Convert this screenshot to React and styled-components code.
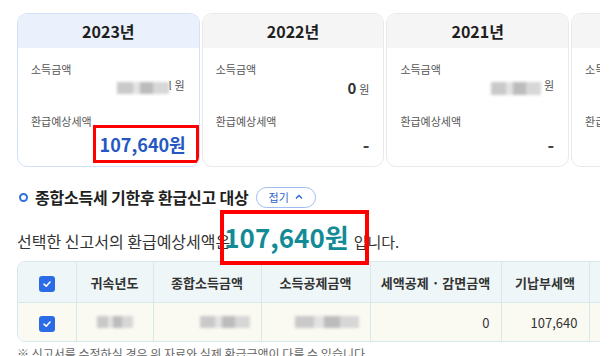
import React from 'react';
import styled, { createGlobalStyle } from 'styled-components';

const GlobalStyle = createGlobalStyle`
  body {
    margin: 0;
    background: #fff;
    font-family: "Noto Sans CJK KR", "Noto Sans", sans-serif;
    color: #222;
  }
`;

const Page = styled.div`
  width: 600px;
  height: 356px;
  overflow: hidden;
  padding: 13px 0 0 17px;
  box-sizing: border-box;
`;

const CardRow = styled.div`
  display: flex;
  gap: 2px;
`;

const Card = styled.div`
  flex: 0 0 182.7px;
  height: 154px;
  box-sizing: border-box;
  border: 1px solid ${(p) => (p.active ? '#d3e1f7' : '#e9e9e9')};
  border-radius: 10px;
  overflow: hidden;
  display: flex;
  flex-direction: column;
`;

const CardHead = styled.div`
  height: 34px;
  flex-shrink: 0;
  display: flex;
  align-items: center;
  justify-content: center;
  background: ${(p) => (p.active ? '#eaf1fc' : '#f5f5f5')};
  font-size: 16px;
  font-weight: 700;
  color: #1e1e1e;
`;

const CardBody = styled.div`
  padding: 8px 14px 0 13px;
  display: flex;
  flex-direction: column;
`;

const Label = styled.div`
  font-size: 11px;
  color: #555;
  line-height: 16px;
  margin-top: ${(p) => p.mt || 0}px;
`;

const ValueRow = styled.div`
  display: flex;
  justify-content: flex-end;
  align-items: baseline;
  gap: 3px;
  height: ${(p) => p.h || 22}px;
  margin-bottom: ${(p) => p.mb || 0}px;
  margin-top: ${(p) => p.mt || 0}px;
`;

const Amount = styled.span`
  font-size: 15px;
  font-weight: 700;
  color: #333;
`;

const Won = styled.span`
  font-size: 11px;
  color: #555;
`;

const Dash = styled.span`
  font-size: 18px;
  font-weight: 700;
  color: #444;
`;

const Blur = styled.span`
  display: inline-block;
  width: ${(p) => p.w}px;
  height: ${(p) => p.h || 12}px;
  background: linear-gradient(90deg, #c9c9c9 0 30%, #e2e2e2 30% 45%, #bcbcbc 45% 70%, #d7d7d7 70%);
  filter: blur(1.5px);
  align-self: center;
`;

const BigValue = styled.span`
  position: relative;
  font-size: 18px;
  font-weight: 700;
  color: #2557c4;
  margin-right: -1px;
`;

const RedBox = styled.span`
  position: absolute;
  left: ${(p) => p.l}px;
  right: ${(p) => p.r}px;
  top: ${(p) => p.t}px;
  bottom: ${(p) => p.b}px;
  border: ${(p) => p.w}px solid #f00;
  pointer-events: none;
`;

const SectionTitle = styled.div`
  display: flex;
  align-items: center;
  margin-top: 19px;
  height: 22px;
`;

const Bullet = styled.span`
  width: 5px;
  height: 5px;
  border: 2px solid #2f6fe0;
  border-radius: 50%;
  margin: 0 7px 0 2px;
`;

const TitleText = styled.span`
  font-size: 16px;
  font-weight: 700;
  color: #1f1f1f;
  letter-spacing: -0.2px;
`;

const Pill = styled.button`
  margin-left: 7px;
  height: 21px;
  padding: 0 12px;
  border: 1px solid #9fbdf0;
  border-radius: 11px;
  background: #fff;
  color: #2d62cc;
  font-family: inherit;
  font-size: 11px;
  display: flex;
  align-items: center;
  gap: 6px;
`;

const Sentence = styled.div`
  margin-top: 10px;
  display: flex;
  align-items: baseline;
  font-size: 16px;
  color: #333;
  height: 30px;
`;

const SumValue = styled.span`
  position: relative;
  font-size: 26px;
  font-weight: 700;
  color: #138b97;
  margin: 0 5px 0 -6px;
`;

const Tail = styled.span`
  font-size: 15px;
`;

const TableWrap = styled.div`
  margin-top: 13px;
  width: 640px;
  border: 1px solid #d7e8eb;
  border-radius: 8px;
  overflow: hidden;
`;

const Table = styled.table`
  border-collapse: collapse;
  table-layout: fixed;
  width: 100%;
`;

const Th = styled.th`
  height: 40px;
  background: #eef6f7;
  font-size: 13px;
  font-weight: 700;
  color: #333;
  border-left: 1px solid #d7e8eb;
  border-bottom: 1px solid #d7e8eb;
  padding: 0;
  &:first-child {
    border-left: none;
  }
`;

const Td = styled.td`
  height: 38px;
  background: #fbfaf2;
  font-size: 13px;
  color: #333;
  border-left: 1px solid #d7e8eb;
  text-align: ${(p) => p.align || 'center'};
  padding: 0 11px;
  &:first-child {
    border-left: none;
  }
`;

const Check = styled.span`
  display: inline-flex;
  width: 16px;
  height: 16px;
  border-radius: 3px;
  background: #2b6be6;
  align-items: center;
  justify-content: center;
  vertical-align: middle;
`;

const Note = styled.div`
  margin-top: 3px;
  font-size: 12px;
  color: #666;
`;

const CheckIcon = () => (
  <Check>
    <svg width="10" height="10" viewBox="0 0 10 10">
      <path d="M2 5.2 L4.2 7.2 L8 3" stroke="#fff" strokeWidth="1.6" fill="none" strokeLinecap="round" strokeLinejoin="round" />
    </svg>
  </Check>
);

const years = [
  { year: '2023년', active: true, income: 'blur1', refund: '107,640원' },
  { year: '2022년', income: '0' },
  { year: '2021년', income: 'blur2' },
  { year: '2020년', income: 'blur2' },
];

export default function App() {
  return (
    <>
      <GlobalStyle />
      <Page>
        <CardRow>
          {years.map((y) => (
            <Card key={y.year} active={y.active}>
              <CardHead active={y.active}>{y.year}</CardHead>
              <CardBody>
                <Label mt={5}>소득금액</Label>
                <ValueRow mb={14}>
                  {y.income === '0' && <Amount>0</Amount>}
                  {y.income === 'blur1' && (
                    <>
                      <Blur w={52} />
                      <Won style={{ marginLeft: -4, color: '#444' }}>l</Won>
                    </>
                  )}
                  {y.income === 'blur2' && <Blur w={50} h={13} />}
                  <Won>원</Won>
                </ValueRow>
                <Label>환급예상세액</Label>
                <ValueRow h={28} mt={2}>
                  {y.refund ? (
                    <BigValue>
                      {y.refund}
                      <RedBox l={-7} r={-13} t={-6} b={-6} w={3} />
                    </BigValue>
                  ) : (
                    <Dash>-</Dash>
                  )}
                </ValueRow>
              </CardBody>
            </Card>
          ))}
        </CardRow>

        <SectionTitle>
          <Bullet />
          <TitleText>종합소득세 기한후 환급신고 대상</TitleText>
          <Pill>
            접기
            <svg width="8" height="6" viewBox="0 0 8 6">
              <path d="M1 4.5 L4 1.5 L7 4.5" stroke="#2d62cc" strokeWidth="1.4" fill="none" />
            </svg>
          </Pill>
        </SectionTitle>

        <Sentence>
          선택한 신고서의 환급예상세액은
          <SumValue>
            107,640원
            <RedBox l={-4} r={-20} t={-8} b={-10} w={4} />
          </SumValue>
          <Tail>입니다.</Tail>
        </Sentence>

        <TableWrap>
          <Table>
            <colgroup>
              <col style={{ width: 58 }} />
              <col style={{ width: 77 }} />
              <col style={{ width: 108 }} />
              <col style={{ width: 109 }} />
              <col style={{ width: 131 }} />
              <col style={{ width: 88 }} />
              <col />
            </colgroup>
            <thead>
              <tr>
                <Th><CheckIcon /></Th>
                <Th>귀속년도</Th>
                <Th>종합소득금액</Th>
                <Th>소득공제금액</Th>
                <Th>세액공제 · 감면금액</Th>
                <Th>기납부세액</Th>
                <Th></Th>
              </tr>
            </thead>
            <tbody>
              <tr>
                <Td><CheckIcon /></Td>
                <Td><Blur w={36} /></Td>
                <Td align="right"><Blur w={50} /></Td>
                <Td align="right"><Blur w={64} /></Td>
                <Td align="right">0</Td>
                <Td align="right">107,640</Td>
                <Td></Td>
              </tr>
            </tbody>
          </Table>
        </TableWrap>
        <Note>※ 신고서를 수정하실 경우 위 자료와 실제 환급금액이 다를 수 있습니다.</Note>
      </Page>
    </>
  );
}
